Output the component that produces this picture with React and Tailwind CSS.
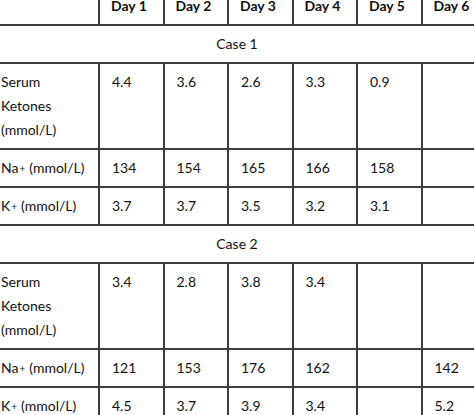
import React from "react";

const DAYS = ["Day 1", "Day 2", "Day 3", "Day 4", "Day 5", "Day 6"];

const CASES = [
  {
    label: "Case 1",
    ketones: ["4.4", "3.6", "2.6", "3.3", "0.9", ""],
    na: ["134", "154", "165", "166", "158", ""],
    k: ["3.7", "3.7", "3.5", "3.2", "3.1", ""],
  },
  {
    label: "Case 2",
    ketones: ["3.4", "2.8", "3.8", "3.4", "", ""],
    na: ["121", "153", "176", "162", "", "142"],
    k: ["4.5", "3.7", "3.9", "3.4", "", "5.2"],
  },
];

const cell = "border-2 border-[#3d3d3d] px-[12px] py-[6px] align-top text-left";

function Ion({ sym }) {
  return (
    <span>
      {sym}
      <sup className="text-[10px] relative -top-[1px] ml-[1px] mr-[4px]">+</sup>(mmol/L)
    </span>
  );
}

function DataRow({ label, values }) {
  return (
    <tr>
      <td className={cell}>{label}</td>
      {values.map((v, i) => (
        <td key={i} className={cell}>{v}</td>
      ))}
    </tr>
  );
}

export default function App() {
  return (
    <div className="w-[474px] h-[415px] overflow-hidden bg-white">
      <table
        className="table-fixed border-collapse w-[498px] -ml-[13px] -mt-[14px] text-[14px] leading-[24px] text-[#111111]"
        style={{ fontFamily: "Lato, 'Open Sans', sans-serif" }}
      >
        <colgroup>
          <col className="w-[111px]" />
          {DAYS.map(d => <col key={d} className="w-[64.5px]" />)}
        </colgroup>
        <thead>
          <tr>
            <th className={cell}></th>
            {DAYS.map(d => (
              <th key={d} className={`${cell} font-bold pl-[11px]`}>{d}</th>
            ))}
          </tr>
        </thead>
        <tbody>
          {CASES.map(c => (
            <React.Fragment key={c.label}>
              <tr>
                <td colSpan={7} className="border-2 border-[#3d3d3d] px-[12px] py-[6px] text-center">{c.label}</td>
              </tr>
              <DataRow label={<>Serum<br />Ketones<br />(mmol/L)</>} values={c.ketones} />
              <DataRow label={<Ion sym="Na" />} values={c.na} />
              <DataRow label={<Ion sym="K" />} values={c.k} />
            </React.Fragment>
          ))}
        </tbody>
      </table>
    </div>
  );
}
